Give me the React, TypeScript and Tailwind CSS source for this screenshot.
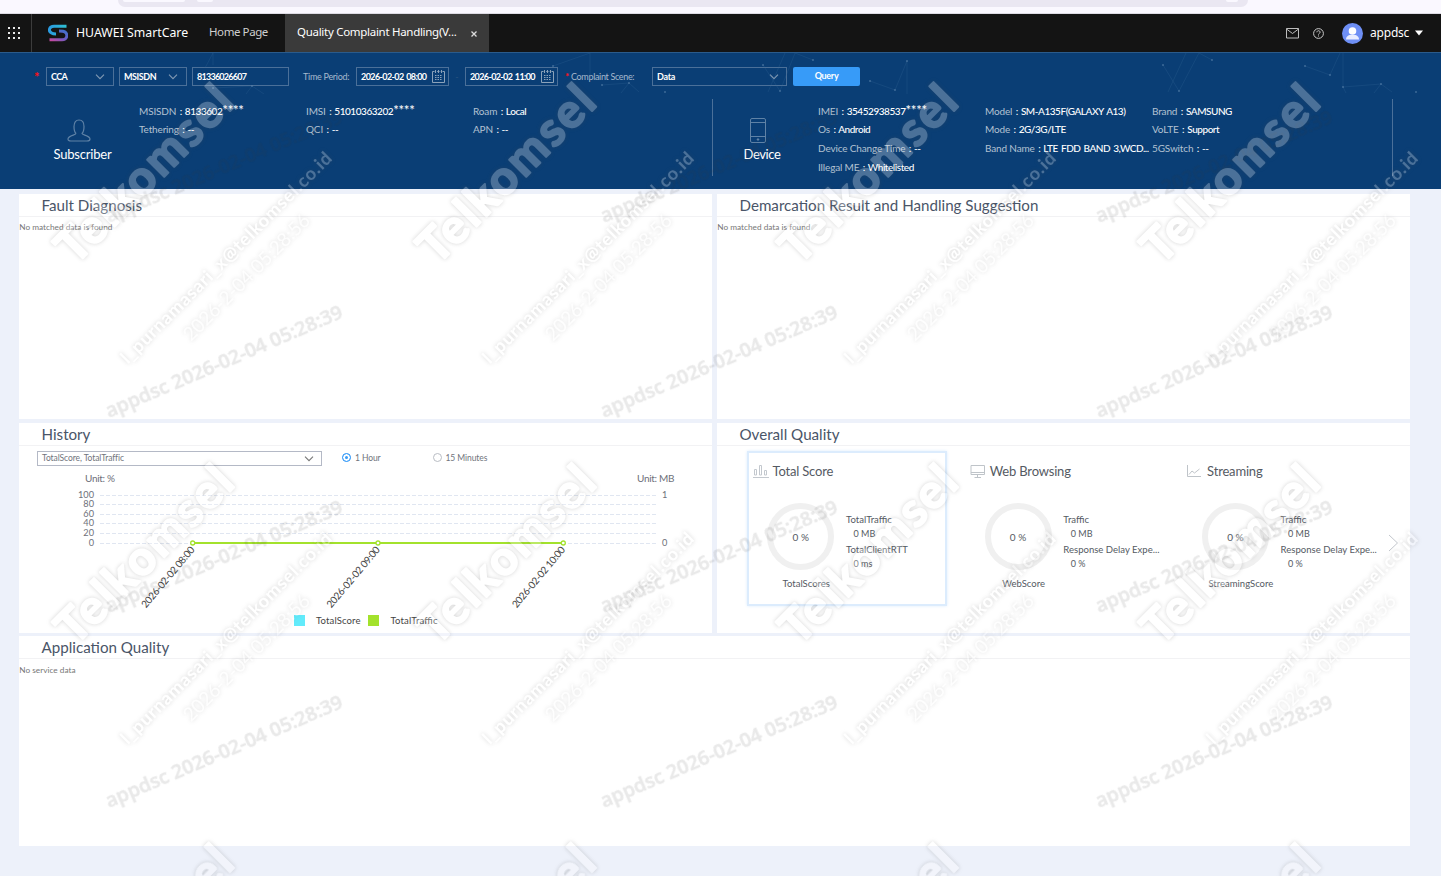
import type { ReactNode } from "react"
import clsx from "clsx"

type Field = { label: string; value: string; mask?: string }
type Metric = { name: string; value: string }
type Card = { title: string; icon: ReactNode; score: string; metrics: Metric[]; active?: boolean }

const barIcon = (
    <svg width="16" height="14" viewBox="0 0 16 14" fill="none" stroke="#c3c8ce">
        <path d="M0 13.5h16M1.5 11V5.5h2V11zM6.5 11V1.5h2V11zM11.500 11V6.500h2V11z" />
    </svg>
)

const monitorIcon = (
    <svg width="16" height="14" viewBox="0 0 16 14" fill="none" stroke="#bfc4c9">
        <path d="M1 1.500h13.500v9H1zM1 8.500h13.500M7.500 11v2M4.500 13.500h6.500" />
    </svg>
)

const lineIcon = (
    <svg width="16" height="14" viewBox="0 0 16 14" fill="none" stroke="#bfc4c9">
        <path d="M.5 1v11.500H14M2 10.500l3-3.500 2.500 2 5-4" />
    </svg>
)

const subscriberCols: Field[][] = [
    [{ label: "MSISDN", value: "8133602", mask: "****" }, { label: "Tethering", value: "--" }],
    [{ label: "IMSI", value: "51010363202", mask: "****" }, { label: "QCI", value: "--" }],
    [{ label: "Roam", value: "Local" }, { label: "APN", value: "--" }],
]

const deviceCols: Field[][] = [
    [
        { label: "IMEI", value: "35452938537", mask: "****" },
        { label: "Os", value: "Android" },
        { label: "Device Change Time", value: "--" },
        { label: "Illegal ME", value: "Whitelisted" },
    ],
    [
        { label: "Model", value: "SM-A135F(GALAXY A13)" },
        { label: "Mode", value: "2G/3G/LTE" },
        { label: "Band Name", value: "LTE FDD BAND 3,WCD..." },
    ],
    [
        { label: "Brand", value: "SAMSUNG" },
        { label: "VoLTE", value: "Support" },
        { label: "5GSwitch", value: "--" },
    ],
]

const cards: Card[] = [
    {
        title: "Total Score",
        icon: barIcon,
        score: "TotalScores",
        active: true,
        metrics: [{ name: "TotalTraffic", value: "0 MB" }, { name: "TotalClientRTT", value: "0 ms" }],
    },
    {
        title: "Web Browsing",
        icon: monitorIcon,
        score: "WebScore",
        metrics: [{ name: "Traffic", value: "0 MB" }, { name: "Response Delay Expe...", value: "0 %" }],
    },
    {
        title: "Streaming",
        icon: lineIcon,
        score: "StreamingScore",
        metrics: [{ name: "Traffic", value: "0 MB" }, { name: "Response Delay Expe...", value: "0 %" }],
    },
]

function Chevron({ color = "#8199b3" }: { color?: string }) {
    return (
        <svg className="shrink-0" width="10" height="6" viewBox="0 0 10 6" fill="none" stroke={color} strokeWidth="1.1">
            <path d="M1 .7l4 4 4-4" />
        </svg>
    )
}

function CalendarIcon() {
    return (
        <svg className="shrink-0" width="13" height="13" viewBox="0 0 13 13" fill="none" stroke="#8ba2ba">
            <path d="M2.500 1.500h-2v11h12v-11h-2M3.500 0v3M6.500 0v3M9.500 0v3M5 1.500h0.800M7.500 1.500h0.800" />
            <path d="M3 5.500h7M3 7.500h7M3 9.500h7" strokeDasharray="1.500 1" />
        </svg>
    )
}

function Box({ className, children }: { className: string; children: ReactNode }) {
    return (
        <div
            className={clsx(
                "flex h-[19px] shrink-0 items-center justify-between border border-[#4b7099] pl-1 text-[9px] font-bold whitespace-nowrap text-white",
                className,
            )}
        >
            {children}
        </div>
    )
}

function TopNav() {
    return (
        <header className="flex h-[39px] shrink-0 border-b border-[#2b5b8b] bg-[#141414] font-['Noto_Sans',sans-serif] text-white">
            <div className="flex w-8 items-center border-r border-[#3c3c3c] pl-2">
                <svg width="12" height="12" viewBox="0 0 12 12" fill="#e8e8e8">
                    {[0, 5, 10].map((y) => [0, 5, 10].map((x) => <rect key={`${x}-${y}`} x={x} y={y} width="2" height="2" />))}
                </svg>
            </div>
            <div className="flex w-[177px] items-center pl-4">
                <svg width="20" height="18" viewBox="0 0 20 18" fill="none" strokeWidth="3">
                    <defs>
                        <linearGradient id="logoTop" x1="0" x2="1" y1="0" y2="0">
                            <stop offset="0" stopColor="#2a9be0" />
                            <stop offset="1" stopColor="#2fc0d2" />
                        </linearGradient>
                        <linearGradient id="logoBottom" x1="0" x2="1" y1="1" y2="0">
                            <stop offset="0" stopColor="#c44aa0" />
                            <stop offset=".5" stopColor="#6a5cc0" />
                            <stop offset="1" stopColor="#3f72cc" />
                        </linearGradient>
                    </defs>
                    <path d="M18.500 2.200H6C1 2.200 0 7 3.500 9c1.200.8 2.500 1 4.500 1" stroke="url(#logoTop)" />
                    <path d="M1.500 15.800H14c5.500 0 6-5.500 3-7.800-1-.8-2.500-1-6-1" stroke="url(#logoBottom)" />
                </svg>
                <span className="ml-2 pt-px text-[12.300px] whitespace-nowrap">HUAWEI SmartCare</span>
            </div>
            <span className="w-[76px] pt-[9px] text-[11.500px] leading-[18px] tracking-[-0.420px] text-[#cfcfcf]">Home Page</span>
            <div className="flex w-[204px] bg-[#3a3a3a] pt-[9px] pl-3 text-[11.500px] leading-[18px]">
                <span className="w-[174px] tracking-[-0.290px] whitespace-nowrap">Quality Complaint Handling(V...</span>
                <svg className="mt-2" width="6" height="6" viewBox="0 0 6 6" stroke="#dcdcdc" strokeWidth="1.300">
                    <path d="M.5.5l5 5M5.500.5l-5 5" />
                </svg>
            </div>
            <div className="ml-auto flex items-center pr-[18px]">
                <svg width="13" height="11" viewBox="0 0 13 11" fill="none" stroke="#bdbdbd">
                    <path d="M.5.5h12v9.500H.5zM.5 1l6 4.500 6-4.500" />
                </svg>
                <svg className="ml-[14px]" width="11" height="11" viewBox="0 0 11 11" fill="none" stroke="#c9c9c9">
                    <circle cx="5.500" cy="5.500" r="4.900" />
                    <path d="M3.900 4.300c0-2.200 3.300-2 3.200 0 0 1.100-1.600 1.100-1.600 2.300M5.500 7.500v1" />
                </svg>
                <svg className="ml-[18px]" width="21" height="21" viewBox="0 0 21 21">
                    <circle cx="10.500" cy="10.500" r="10.500" fill="#6e8ff5" />
                    <circle cx="10.500" cy="8" r="3.800" fill="#fff" />
                    <path d="M4 16.500c0-3 2.500-4.500 4-4.500h5c1.500 0 4 1.500 4 4.500z" fill="#e9edff" />
                </svg>
                <span className="ml-[7px] w-[38px] text-[12px] tracking-[-0.200px]">appdsc</span>
                <svg className="ml-[7px]" width="8" height="6" viewBox="0 0 8 6" fill="#fff">
                    <path d="M0 .5h8L4 5.500z" />
                </svg>
            </div>
        </header>
    )
}

// faint network drawing behind the query form
function Constellation() {
    const dots = [
        [213, 88], [252, 86], [553, 66], [602, 85], [629, 83], [665, 92], [763, 65], [780, 91], [813, 60], [870, 81],
        [895, 90], [907, 61], [1163, 65], [1179, 91], [1212, 60], [1305, 66], [1330, 75], [1343, 87], [1381, 84], [1416, 92],
    ]
    return (
        <svg className="pointer-events-none absolute top-0 left-0" width="1441" height="41" viewBox="0 53 1441 41" fill="none">
            <path
                d="M213 53v12M213 53l-8 15M213 88l39-2 12 8M252 86l-6 8M553 66l37-13M590 53v26M602 85l27-2 10 9M629 83l-8 10M763 65l17 26 15-38 18 7M768 92l17-39M870 81l25 9 12-29v33M1163 65l16 26 20-38 13 7M1168 92l18-39M1305 66l25 9 10-22M1343 53v34l38-3 11 8M1381 84l-7 9M1343 87l3 6"
                stroke="#3c6c9c"
                strokeOpacity=".3"
                strokeWidth=".8"
            />
            {dots.map(([x, y]) => <circle key={`${x}-${y}`} cx={x} cy={y} r="1" fill="#5d86ad" fillOpacity=".6" />)}
        </svg>
    )
}

function QueryForm() {
    return (
        <div className="flex h-[19px] items-center pl-[34px] text-[9px] text-[#a6b9cd]">
            <span className="w-3 text-[13px] leading-[14px] font-bold text-[#ff1018]">*</span>
            <Box className="w-[68px] pr-2 tracking-[-0.600px]">CCA <Chevron /></Box>
            <Box className="ml-[5px] w-[68px] pr-2 tracking-[-0.450px]">MSISDN <Chevron /></Box>
            <Box className="ml-[5px] w-[97px] tracking-[-0.750px]">81336026607</Box>
            <span className="ml-[14px] w-[53px] tracking-[-0.280px] whitespace-nowrap">Time Period:</span>
            <Box className="w-[93px] pr-[3px] tracking-[-0.590px]"><span className="[word-spacing:1px]">2026-02-02 08:00</span> <CalendarIcon /></Box>
            <span className="w-4 text-center text-[#28537f]">-</span>
            <Box className="w-[93px] pr-[3px] tracking-[-0.620px]"><span className="[word-spacing:1px]">2026-02-02 11:00</span> <CalendarIcon /></Box>
            <span className="ml-[7px] w-[6px] text-[10px] font-bold text-[#ff1018]">*</span>
            <span className="w-[81px] tracking-[-0.330px] whitespace-nowrap">Complaint Scene:</span>
            <Box className="w-[135px] pr-[7px] tracking-[-0.300px]">Data <Chevron /></Box>
            <button className="ml-[6px] h-[19px] w-[67px] rounded-[2px] bg-[#379bf8] pb-px text-[9px] font-bold tracking-[-0.300px] text-white">Query</button>
        </div>
    )
}

function FieldColumns({ cols }: { cols: Field[][] }) {
    return (
        <div className="flex pt-[3px]">
            {cols.map((col, i) => (
                <div key={i} className="w-[167px]">
                    {col.map((f) => (
                        <div
                            key={f.label}
                            className="h-[18.400px] text-[10px] leading-[18px] tracking-[-0.150px] whitespace-nowrap text-[#b3c2d2] nth-[n+3]:relative nth-[n+3]:top-[0.500px]"
                        >
                            {f.label}{" "}
                            <span className="ml-px font-medium tracking-[-0.450px] text-white [word-spacing:1px]">
                                : {f.value}
                                {f.mask && <span className="text-[13px] leading-[10px] tracking-[-0.200px]">{f.mask}</span>}
                            </span>
                        </div>
                    ))}
                </div>
            ))}
        </div>
    )
}

function InfoHeader() {
    return (
        <section className="relative h-[136px] shrink-0 bg-[#0a3e75] pt-[14px]">
            <Constellation />
            <QueryForm />
            <div className="mt-[13px] flex h-[77px]">
                <div className="flex w-[713px] border-r border-[#4b7099]">
                    <div className="flex w-[139px] flex-col items-center pt-5 pl-[26px]">
                        <svg className="mr-[7px]" width="24" height="23" viewBox="0 0 24 23" fill="none" stroke="#5f82a6" strokeWidth="1.200">
                            <path d="M9 14.500C7.500 13 7 11 7 7.500 7 3 9 1 12 1s5 2 5 6.500c0 3.500-.5 5.500-2 7 0 1.500 8 2 8 5.500 0 1.500-1 2-3 2H4c-2 0-3-.5-3-2 0-3.500 8-4 8-5.500" />
                        </svg>
                        <span className="text-[13px] leading-6 tracking-[-0.200px] text-white">Subscriber</span>
                    </div>
                    <FieldColumns cols={subscriberCols} />
                </div>
                <div className="flex w-[680px] border-r border-[#4b7099]">
                    <div className="flex w-[105px] flex-col items-center pt-[19px]">
                        <svg className="mr-[15px]" width="16" height="25" viewBox="0 0 16 25" fill="none" stroke="#5f82a6">
                            <rect x=".5" y=".5" width="15" height="24" rx="1.500" />
                            <path d="M.5 4.500h15M.5 18.500h15" />
                            <circle cx="8" cy="21.500" r=".8" fill="#8ba5c0" />
                        </svg>
                        <span className="mr-[7px] text-[13px] leading-[23px] tracking-[-0.400px] text-white">Device</span>
                    </div>
                    <FieldColumns cols={deviceCols} />
                </div>
            </div>
        </section>
    )
}

function Panel({ title, className, children }: { title: string; className: string; children: ReactNode }) {
    return (
        <section className={clsx("overflow-hidden bg-white", className)}>
            <h2 className="h-[23px] border-b border-[#f2f2f4] pl-[22.500px] text-[15.150px] leading-[23px] text-[#4a5568]">{title}</h2>
            {children}
        </section>
    )
}

function EmptyNote({ text }: { text: string }) {
    return <p className="pt-1 pl-[0.300px] text-[8.250px] leading-3 text-[#777]">{text}</p>
}

function HistoryChart() {
    const points = [
        { x: 192.7, label: "2026-02-02 08:00" },
        { x: 378, label: "2026-02-02 09:00" },
        { x: 563.3, label: "2026-02-02 10:00" },
    ]
    const ticks = [100, 80, 60, 40, 20, 0]
    return (
        <svg width="693" height="166" viewBox="19 467 693 166" fontSize="10" fill="#6e7079">
            <text x="85" y="482" textLength="30">Unit: %</text>
            <text x="637" y="482" textLength="37.500">Unit: MB</text>
            {ticks.map((t, i) => (
                <g key={t}>
                    <text x="94" y={497.5 + i * 9.6} textAnchor="end" fontSize="9.200">{t}</text>
                    <path d={`M100 ${Math.round(494.6 + i * 9.6) + 0.5}H656`} stroke="#e0e6f1" strokeDasharray="4 2" />
                </g>
            ))}
            <text x="662" y="497.500" fontSize="9.200">1</text>
            <text x="662" y="545.500" fontSize="9.200">0</text>
            <path d="M192.700 543H563.300" stroke="#a3e22c" strokeWidth="2" />
            {points.map((p) => (
                <g key={p.label}>
                    <circle cx={p.x} cy="543" r="2" fill="#fff" stroke="#a3e22c" strokeWidth="1.300" />
                    <text
                        transform={`translate(${p.x + 2.5} 550) rotate(-50)`}
                        textAnchor="end"
                        textLength="76.500"
                        fill="#444"
                    >
                        {p.label}
                    </text>
                </g>
            ))}
            <rect x="294" y="615" width="11" height="11" fill="#62ebfb" />
            <text x="316" y="623.500" fontSize="9.500" fill="#444" textLength="44.500">TotalScore</text>
            <rect x="368" y="615" width="11" height="11" fill="#a3e22c" />
            <text x="390.500" y="623.500" fontSize="9.500" fill="#444" textLength="47">TotalTraffic</text>
        </svg>
    )
}

function QualityCard({ card }: { card: Card }) {
    return (
        <div
            className={clsx(
                "mr-[17.300px] h-[155px] w-[200px] shrink-0 border-2 pt-[8px] text-[#555a63]",
                card.active ? "border-[#dcecfd] shadow-[0_0_3px_#dcecfd]" : "border-transparent",
            )}
        >
            <div className="flex h-5 items-center gap-1 pl-1 text-[13px] tracking-[-0.180px]">
                {card.icon}
                <span className="leading-5 whitespace-nowrap">{card.title}</span>
            </div>
            <div className="mt-[22px] flex">
                <div className="flex w-[97.500px] flex-col items-center">
                    <div className="mr-[-7px] flex size-[67px] items-center justify-center rounded-full border-[6.500px] border-[#f0f0f0] pt-px text-[10px]">
                        0 %
                    </div>
                    <span className="mt-2 mr-[-18px] text-[9.500px] leading-3 whitespace-nowrap">{card.score}</span>
                </div>
                <div className="pt-[10px]">
                    {card.metrics.map((m) => (
                        <div key={m.name} className="mb-[3px] text-[9.550px] leading-[13.500px] whitespace-nowrap">
                            <div>{m.name}</div>
                            <div className="pl-[7.500px] text-[9px]">{m.value}</div>
                        </div>
                    ))}
                </div>
            </div>
        </div>
    )
}

function Watermark() {
    const cols = [0, 1, 2, 3]
    const rows = [0, 1, 2]
    return (
        <svg className="pointer-events-none absolute top-[53px] left-0" width="1441" height="823" viewBox="0 53 1441 823">
            <defs>
                <filter id="emboss" filterUnits="userSpaceOnUse" x="0" y="53" width="1441" height="823" colorInterpolationFilters="sRGB">
                    <feGaussianBlur in="SourceAlpha" stdDeviation="2.200" result="blur" />
                    <feComposite in="blur" in2="SourceAlpha" operator="out" result="ring" />
                    <feColorMatrix in="ring" type="matrix" values="0 0 0 0 .3  0 0 0 0 .3  0 0 0 0 .3  0 0 0 .24 0" result="halo" />
                    <feComponentTransfer in="SourceGraphic" result="face">
                        <feFuncA type="linear" slope=".27" />
                    </feComponentTransfer>
                    <feMerge>
                        <feMergeNode in="halo" />
                        <feMergeNode in="face" />
                    </feMerge>
                </filter>
            </defs>
            <g
                fill="#3a3a3a"
                stroke="#3a3a3a"
                strokeWidth=".6"
                opacity=".11"
                fontFamily="Open Sans, Noto Sans, sans-serif"
                fontSize="19.500"
                fontWeight="600"
            >
                {[223, 418, 613, 808].map((y) =>
                    [109, 604, 1099].map((x) => (
                        <text key={`${x}-${y}`} transform={`translate(${x} ${y}) rotate(-23.200)`} textLength="256">
                            appdsc 2026-02-04 05:28:39
                        </text>
                    )),
                )}
            </g>
            <g filter="url(#emboss)" fill="#fff" fontFamily="Lato, sans-serif">
                {rows.map((r) =>
                    cols.map((c) => (
                        <g key={`${c}-${r}`} transform={`translate(${c * 362} ${r * 380.5})`}>
                            <text
                                transform="translate(75 266) rotate(-45)"
                                fontSize="47"
                                fontWeight="700"
                                textLength="228"
                                stroke="#fff"
                                strokeWidth="2"
                                strokeLinejoin="round"
                            >
                                Telkomsel
                            </text>
                            {/* the last row only has room for the brand */}
                            {r < 2 && (
                                <>
                                    <text transform="translate(128 364.500) rotate(-45)" fontSize="18" fontWeight="700" textLength="290">
                                        l_purnamasari_x@telkomsel.co.id
                                    </text>
                                    <text transform="translate(191 342) rotate(-45)" fontSize="19" textLength="170" fillOpacity=".8">
                                        2026-2-04 05:28:56
                                    </text>
                                </>
                            )}
                        </g>
                    )),
                )}
            </g>
        </svg>
    )
}

export default function App() {
    return (
        <div className="relative flex h-[876px] w-[1441px] flex-col overflow-hidden bg-[#edf1fa] font-['Lato',sans-serif]">
            {/* bottom edge of the browser address bar */}
            <div className="h-[14px] shrink-0 border-b border-[#dddbe4] bg-[#faf8ff] pl-[118px]">
                <div className="flex h-[7px] w-[1130px] justify-between rounded-b-[7px] bg-[#eae7f2] px-[5px]">
                    <div className="flex gap-3">
                        <div className="h-[2px] w-[62px] rounded-b-full bg-[#faf8ff]" />
                        <div className="h-[2px] w-4 rounded-b-full bg-[#faf8ff]" />
                    </div>
                    <div className="mr-[5px] h-[2px] w-3 rounded-b-full bg-[#faf8ff]" />
                </div>
            </div>
            <TopNav />
            <InfoHeader />

            <main className="flex flex-col px-[19px] pt-[5px]">
                <div className="flex gap-[5px]">
                    <Panel title="Fault Diagnosis" className="h-[225px] w-[693px]">
                        <EmptyNote text="No matched data is found" />
                    </Panel>
                    <Panel title="Demarcation Result and Handling Suggestion" className="h-[225px] w-[693px]">
                        <EmptyNote text="No matched data is found" />
                    </Panel>
                </div>

                <div className="mt-1 flex gap-[5px]">
                    <Panel title="History" className="h-[210px] w-[693px]">
                        <div className="flex h-[21px] items-center pt-1 pl-[18px] text-[8.500px] tracking-[-0.080px] text-[#70747c]">
                            <div className="flex h-[15px] w-[285px] items-center justify-between border border-[#b4b9c6] pr-[7px] pl-1">
                                TotalScore, TotalTraffic <Chevron color="#777" />
                            </div>
                            <span className="mb-[3px] ml-5 size-[9px] rounded-full border border-[#379bf8] bg-[#379bf8] shadow-[inset_0_0_0_2px_white]" />
                            <span className="ml-1 w-[77.500px]">1 Hour</span>
                            <span className="mb-[3px] size-[9px] rounded-full border border-[#b9bdc4]" />
                            <span className="ml-1">15 Minutes</span>
                        </div>
                        <HistoryChart />
                    </Panel>
                    <Panel title="Overall Quality" className="h-[210px] w-[693px]">
                        <div className="flex items-start pt-[5px] pl-[29.500px]">
                            {cards.map((card) => <QualityCard key={card.title} card={card} />)}
                            <svg className="mt-[83px] -ml-[10px] shrink-0" width="11" height="18" viewBox="0 0 11 18" fill="none" stroke="#c3c7cd">
                                <path d="M1 1l8.500 8L1 17" />
                            </svg>
                        </div>
                    </Panel>
                </div>

                <Panel title="Application Quality" className="mt-[3px] h-[210px] w-[1391px]">
                    <div className="pt-px">
                        <EmptyNote text="No service data" />
                    </div>
                </Panel>
            </main>

            <Watermark />
        </div>
    )
}
